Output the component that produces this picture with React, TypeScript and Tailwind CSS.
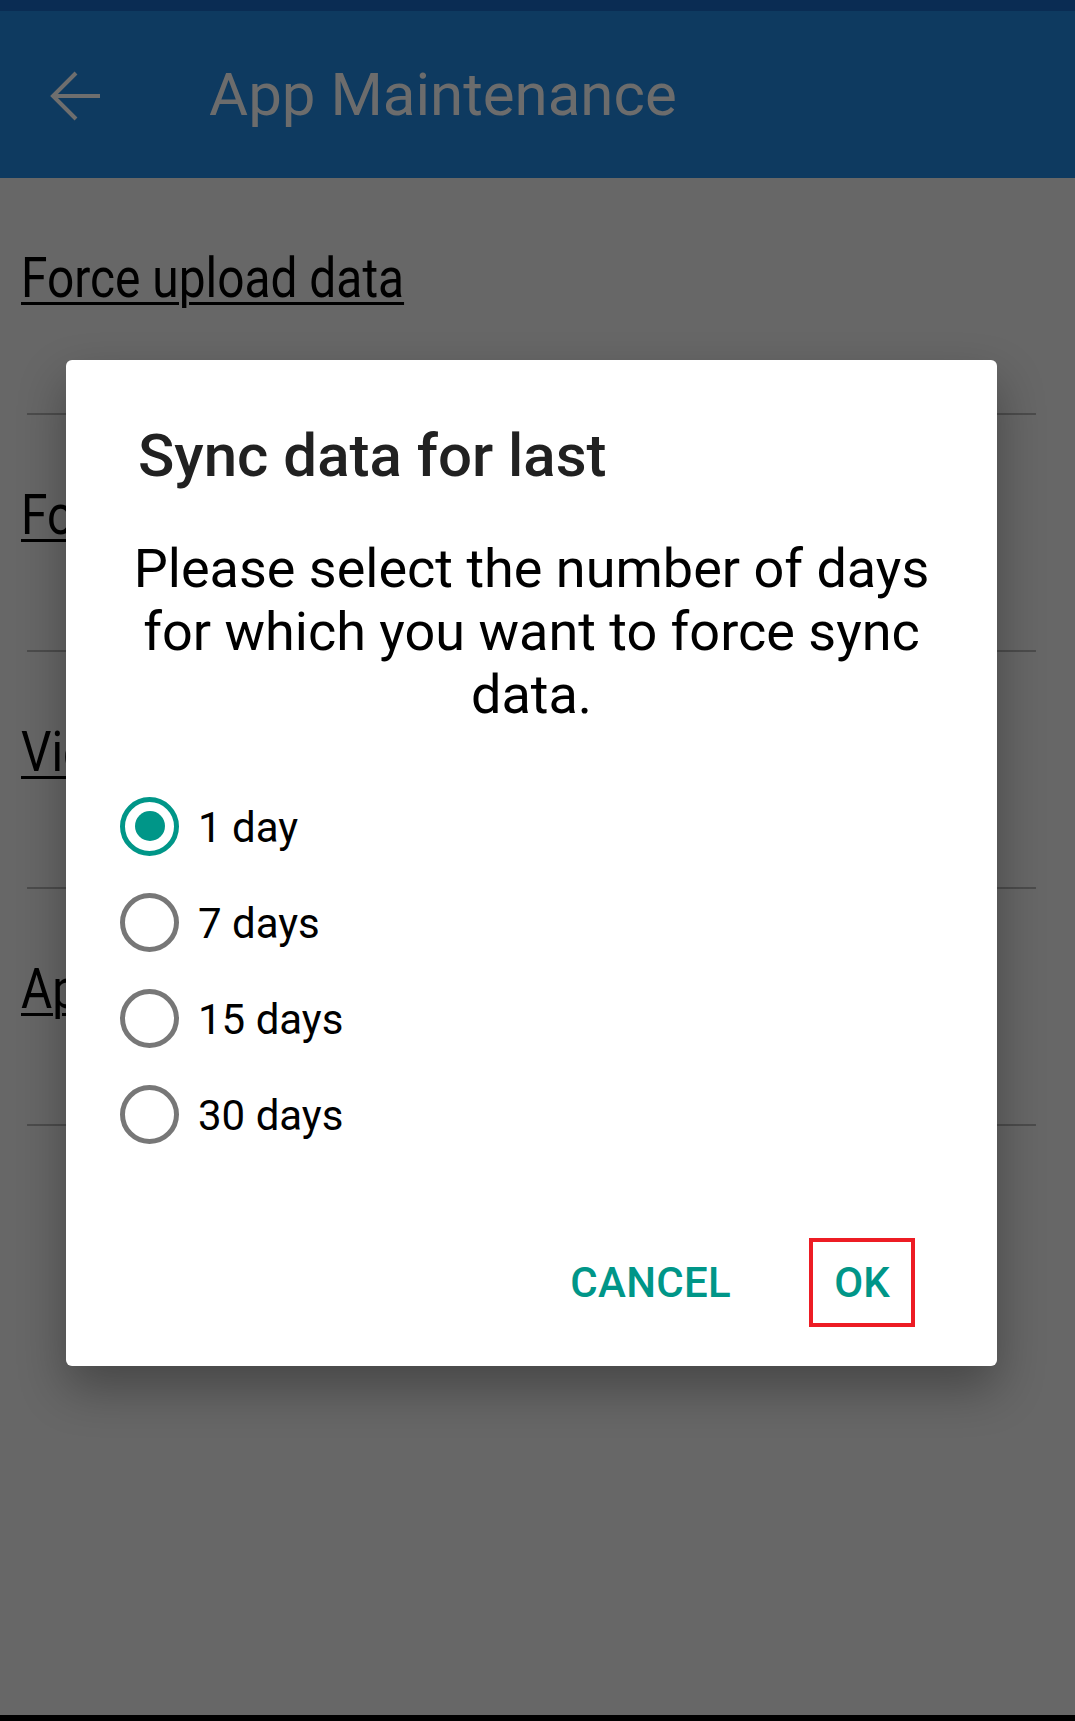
import React, { useState } from 'react';

const menuItems = [
  'Force upload data',
  'Force download data',
  'View sync logs',
  'App version info',
];

const dayOptions = ['1 day', '7 days', '15 days', '30 days'];

function BackArrow() {
  return (
    <svg width="52" height="52" viewBox="0 0 52 52" fill="none" stroke="#6e6e6e" strokeWidth="4" strokeLinecap="butt">
      <path d="M2 26H50" />
      <path d="M26 3L3 26L26 49" />
    </svg>
  );
}

export default function App() {
  const [selected, setSelected] = useState('1 day');

  return (
    <div className="relative w-[1075px] h-[1721px] flex flex-col bg-[#676767] overflow-hidden" style={{ fontFamily: 'Roboto, "Liberation Sans", sans-serif' }}>
      {/* Status bar */}
      <div className="h-[11px] bg-[#0a2c53]" />

      {/* Toolbar */}
      <div className="h-[167px] bg-[#0e3a60] flex items-center">
        <div className="ml-[50px] mt-[2px] flex items-center">
          <BackArrow />
        </div>
        <h1 className="ml-[107px] text-[60px] leading-[70px] text-[#6c6c6c] font-normal">App Maintenance</h1>
      </div>

      {/* Menu list */}
      <div className="flex-1 flex flex-col">
        {menuItems.map((item) => (
          <div key={item} className="flex flex-col">
            <div className="h-[235px] pt-[68px] pl-[21px]">
              <span className="inline-block origin-left scale-x-[0.87] text-[55px] leading-[64px] text-black underline decoration-[3px] underline-offset-[5px] whitespace-nowrap">
                {item}
              </span>
            </div>
            <div className="ml-[27px] w-[1009px] h-[2px] bg-[#4c4c4c]" />
          </div>
        ))}
      </div>

      {/* Nav bar strip */}
      <div className="h-[6px] bg-black" />

      {/* Dialog */}
      <div className="absolute left-[66px] top-[360px] w-[931px] h-[1006px] bg-white rounded-[6px] shadow-[0_22px_48px_rgba(0,0,0,0.32)] flex flex-col">
        <h2 className="mt-[61px] ml-[72px] text-[60px] leading-[70px] font-medium text-[#212121]">Sync data for last</h2>
        <p className="mt-[46px] mx-auto w-[866px] text-center text-[54px] leading-[63px] text-black">
          Please select the number of days for which you want to force sync data.
        </p>

        <div className="mt-[52px] ml-[54px] flex flex-col">
          {dayOptions.map((opt) => {
            const active = selected === opt;
            return (
              <button
                key={opt}
                onClick={() => setSelected(opt)}
                className="h-[96px] flex items-center gap-[19px] text-left"
              >
                <span
                  className={`w-[59px] h-[59px] rounded-full border-[5px] flex items-center justify-center ${
                    active ? 'border-[#009688]' : 'border-[#777777]'
                  }`}
                >
                  {active && <span className="w-[30px] h-[30px] rounded-full bg-[#009688]" />}
                </span>
                <span className="text-[42px] leading-[48px] pt-[4px] text-black">{opt}</span>
              </button>
            );
          })}
        </div>

        <div className="mt-[76px] mr-[82px] flex items-center justify-end gap-[78px]">
          <button className="text-[42px] leading-[50px] font-medium text-[#009688] tracking-[0.3px]">CANCEL</button>
          <button className="w-[106px] h-[89px] border-[4px] border-[#ed1c24] flex items-center justify-center text-[42px] leading-[50px] font-medium text-[#009688]">
            OK
          </button>
        </div>
      </div>
    </div>
  );
}
